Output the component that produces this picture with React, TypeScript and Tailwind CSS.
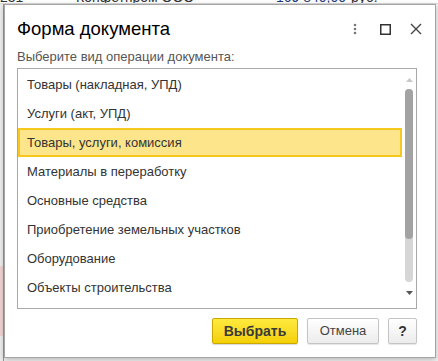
import React from "react";

const items = [
  "Товары (накладная, УПД)",
  "Услуги (акт, УПД)",
  "Товары, услуги, комиссия",
  "Материалы в переработку",
  "Основные средства",
  "Приобретение земельных участков",
  "Оборудование",
  "Объекты строительства",
];

const selected = 2;

function Kebab() {
  return (
    <svg width="4" height="12" viewBox="0 0 4 12">
      <circle cx="2" cy="2" r="1.3" fill="#777" />
      <circle cx="2" cy="6" r="1.3" fill="#777" />
      <circle cx="2" cy="10" r="1.3" fill="#777" />
    </svg>
  );
}

function MaxIcon() {
  return (
    <svg width="11" height="11" viewBox="0 0 11 11">
      <rect x="0.75" y="0.75" width="9.5" height="9.5" fill="none" stroke="#333" strokeWidth="1.5" />
    </svg>
  );
}

function CloseIcon() {
  return (
    <svg width="12" height="12" viewBox="0 0 12 12">
      <path d="M1 1 L11 11 M11 1 L1 11" stroke="#444" strokeWidth="1.4" />
    </svg>
  );
}

export default function App() {
  return (
    <div
      className="relative w-[438px] h-[361px] overflow-hidden bg-[#f4f4f4]"
      style={{ fontFamily: '"Liberation Sans", Arial, sans-serif' }}
    >
      {/* table behind the dialog */}
      <div className="flex h-[4px] items-end overflow-hidden bg-white border-b border-[#d8d8d8]">
        <div className="flex shrink-0 text-[14px] leading-[16px] text-[#333] -mb-[2px]">
          <span className="w-[76px] shrink-0">231</span>
          <span className="w-[200px] shrink-0">Конфетпром ООО</span>
          <span className="w-[75px] shrink-0 text-[#1a3a7a]">169 840,00</span>
          <span>руб.</span>
        </div>
      </div>
      <div className="flex h-[357px]">
        <div className="flex w-[4px] flex-col border-r border-[#9a9a9a] bg-[#eeeeee]">
          <div className="h-[262px]" />
          <div className="h-[70px] bg-[#f2d4d4]" />
        </div>
        <div className="flex-1" />
      </div>

      {/* dialog */}
      <div className="absolute left-[4px] top-[4px] w-[432px] h-[354px] flex flex-col border border-[#a4a4a4] bg-white shadow-[0_2px_6px_rgba(0,0,0,0.25)]">
        <div className="flex h-[38px] items-end pl-[12px] pr-[13px]">
          <div className="flex-1 text-[18.5px] leading-[19px] text-black pb-[5px]">Форма документа</div>
          <div className="flex items-center pb-[8px]">
            <div className="w-[4px] flex justify-center">
              <Kebab />
            </div>
            <div className="ml-[23px]">
              <MaxIcon />
            </div>
            <div className="ml-[19px]">
              <CloseIcon />
            </div>
          </div>
        </div>

        <div className="pl-[12px] pt-[6px] text-[13px] leading-[15px] text-[#555]">
          Выберите вид операции документа:
        </div>

        <div className="ml-[12px] mt-[4px] w-[400px] h-[241px] border border-[#a8a8a8] flex">
          <div className="flex-1 flex flex-col pt-[1px]">
            {items.map((t, i) => (
              <div
                key={t}
                className={
                  i === selected
                    ? "h-[29px] flex items-center pl-[7px] text-[13px] text-[#333] bg-[#fde58c] border-2 border-[#f6c71c]"
                    : "h-[29px] flex items-center pl-[9px] text-[13px] text-[#333]"
                }
              >
                {t}
              </div>
            ))}
          </div>
          <div className="w-[14px] flex flex-col items-center pt-[9px]">
            <svg width="7" height="4" viewBox="0 0 7 4">
              <path d="M0 4 L3.5 0 L7 4 Z" fill="#c8c8c8" />
            </svg>
            <div className="mt-[7px] w-[8px] h-[193px] rounded-full bg-[#d6d6d6] flex flex-col">
              <div className="h-[150px] rounded-full bg-[#a3a3a3]" />
            </div>
            <div className="mt-[9px]">
              <svg width="7" height="4" viewBox="0 0 7 4">
                <path d="M0 0 L7 0 L3.5 4 Z" fill="#555" />
              </svg>
            </div>
          </div>
        </div>

        <div className="flex justify-end gap-[9px] pr-[18px] mt-[9px]">
          <button className="w-[86px] h-[26px] rounded-[2px] border border-[#c9a800] bg-gradient-to-b from-[#ffea3c] to-[#f4d000] text-[14px] font-bold text-[#3a3a3a] shadow-[0_1px_1px_rgba(0,0,0,0.15)]">
            Выбрать
          </button>
          <button className="w-[72px] h-[26px] rounded-[2px] border border-[#c4c4c4] bg-gradient-to-b from-white to-[#ececec] text-[13px] text-[#444] shadow-[0_1px_1px_rgba(0,0,0,0.1)]">
            Отмена
          </button>
          <button className="w-[29px] h-[26px] rounded-[2px] border border-[#c4c4c4] bg-gradient-to-b from-white to-[#ececec] text-[14px] font-bold text-[#333] shadow-[0_1px_1px_rgba(0,0,0,0.1)]">
            ?
          </button>
        </div>
      </div>
    </div>
  );
}
